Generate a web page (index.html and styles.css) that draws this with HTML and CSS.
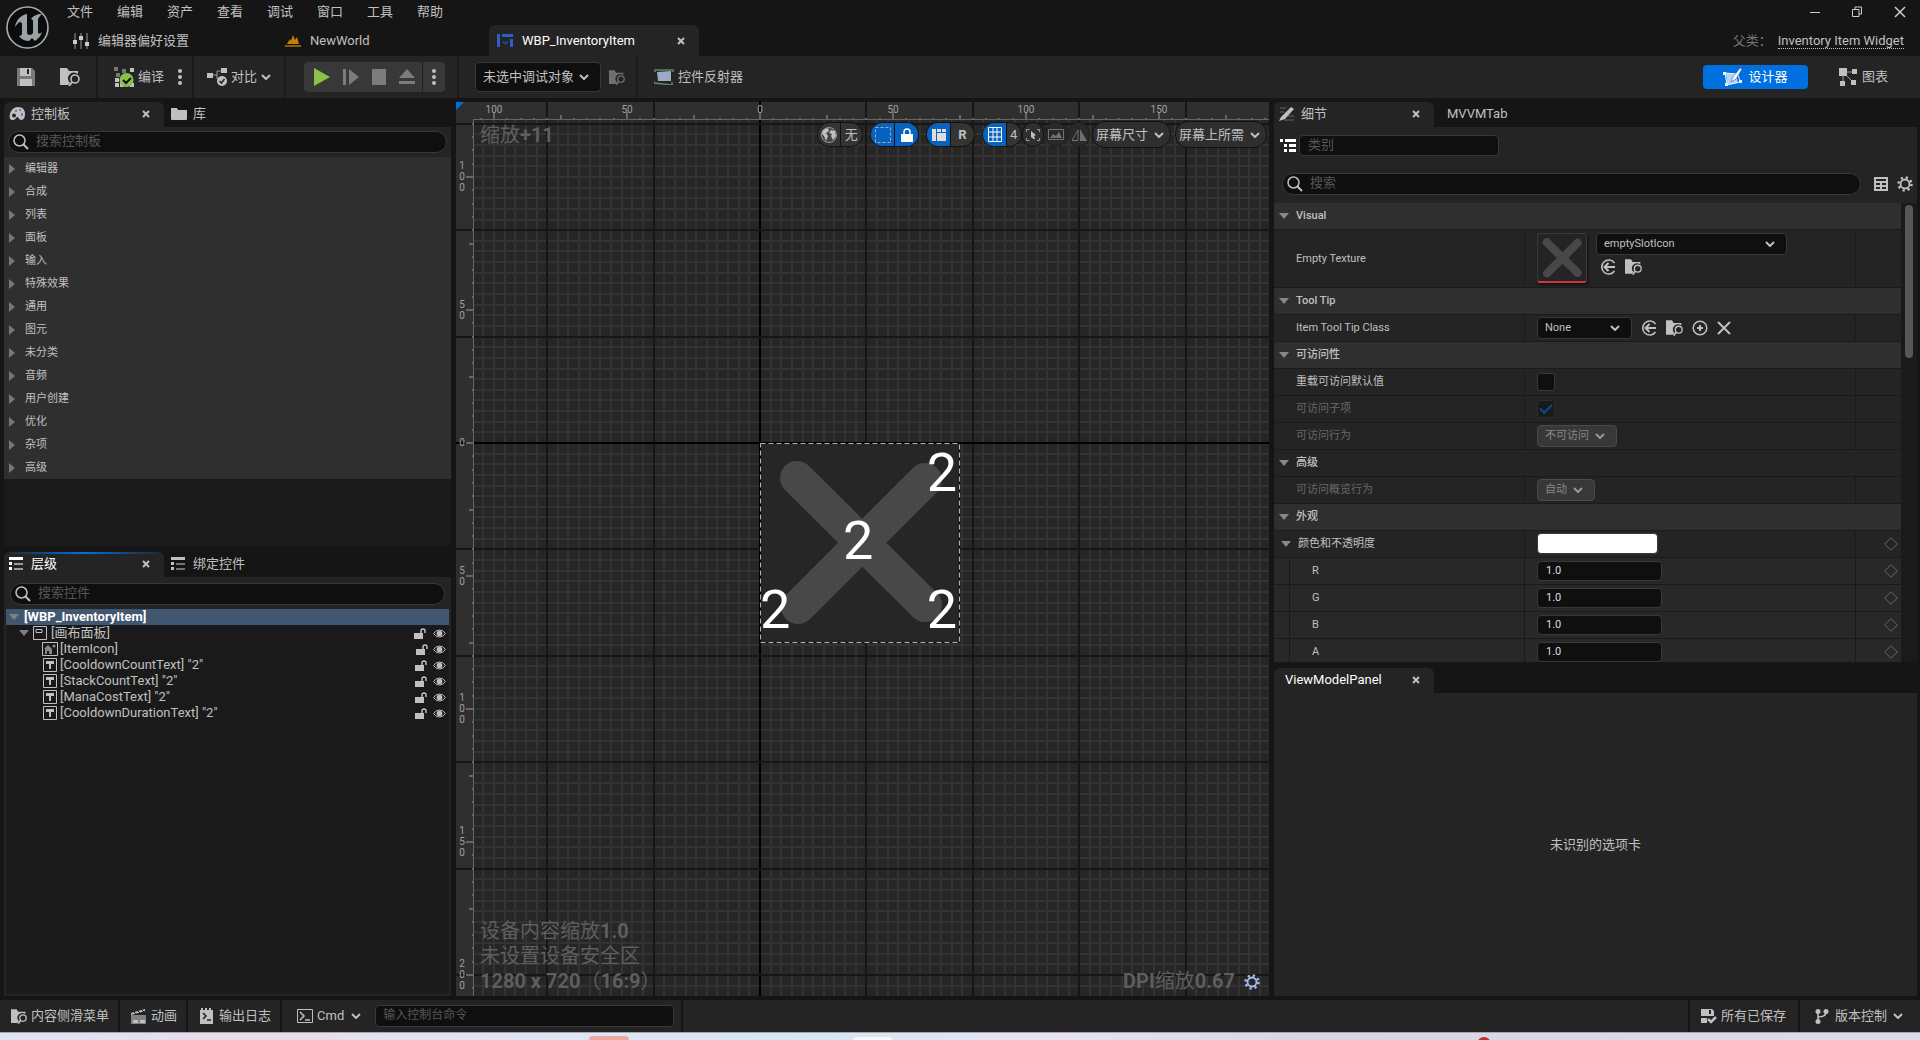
FILE: index.html
```html
<!DOCTYPE html>
<html lang="zh-CN">

<head>
    <meta charset="UTF-8">
    <meta name="viewport" content="width=device-width, initial-scale=1.0">
    <title>WBP_InventoryItem</title>
    <link rel="stylesheet" href="styles.css">
</head>

<body>
    <svg width="0" height="0" class="sprite">
        <symbol id="i-close" viewBox="0 0 8 8"><path d="M1 1l6 6M7 1L1 7" stroke="currentColor" stroke-width="2"/></symbol>
        <symbol id="i-chevron" viewBox="0 0 10 6"><path d="M1 1l4 4 4-4" fill="none" stroke="currentColor" stroke-width="2"/></symbol>
        <symbol id="i-dots" viewBox="0 0 4 16"><circle cx="2" cy="2" r="2"/><circle cx="2" cy="8" r="2"/><circle cx="2" cy="14" r="2"/></symbol>
        <symbol id="i-search" viewBox="0 0 16 16"><circle cx="6.500" cy="6.500" r="5.500" fill="none" stroke="currentColor" stroke-width="1.500"/><path d="M10.500 10.500l4.500 4.500" stroke="currentColor" stroke-width="2"/></symbol>
        <symbol id="i-right" viewBox="0 0 6 10"><path d="M0 0l6 5-6 5z"/></symbol>
        <symbol id="i-down" viewBox="0 0 10 6"><path d="M0 0h10L5 6z"/></symbol>
        <symbol id="i-browse" viewBox="0 0 20 18">
            <path d="M0 0h7l2 3h9v3a6 6 0 0 0-8 9l-2 2H0z"/>
            <circle cx="15" cy="11" r="4" fill="none" stroke="currentColor" stroke-width="1.600"/>
            <path d="M12 14l-3 4" stroke="currentColor" stroke-width="2"/>
        </symbol>
        <symbol id="i-folder" viewBox="0 0 16 12"><path d="M0 0h6l1 2h9v1H0zM0 3h16v8a1 1 0 0 1-1 1H1a1 1 0 0 1-1-1z"/></symbol>
        <symbol id="i-save" viewBox="0 0 18 18">
            <path d="M0 0h15l3 3v15H0z" opacity=".55"/><path d="M3 0h11v8H3zM3 11h12v7H3z"/><path d="M10 1h2v5h-2z" fill="#242424"/>
        </symbol>
        <symbol id="i-list" viewBox="0 0 14 13"><path d="M0 0h14v3H0zM0 5h3v3H0zM0 10h3v3H0z"/><path d="M5 6h9v2H5zM5 11h9v2H5z" opacity=".55"/></symbol>
        <symbol id="i-tree" viewBox="0 0 16 13"><path d="M0 0h3v3H0zM5 0h11v3H5zM4 5h3v3H4zM9 5h7v3H9zM4 10h3v3H4zM9 10h7v3H9z"/></symbol>
        <symbol id="i-use" viewBox="0 0 16 16"><path d="M14.500 4A7 7 0 1 0 14.500 12" fill="none" stroke="currentColor" stroke-width="1.600"/><path d="M15 8H5M8.500 4L4.500 8l4 4" fill="none" stroke="currentColor" stroke-width="2"/></symbol>
        <symbol id="i-plus" viewBox="0 0 16 16"><circle cx="8" cy="8" r="6.800" fill="none" stroke="currentColor" stroke-width="1.500"/><path d="M8 5v6M5 8h6" stroke="currentColor" stroke-width="2"/></symbol>
        <symbol id="i-unlock" viewBox="0 0 12 11"><path d="M0 5h9v6H0z"/><path d="M7 5V3a2 2 0 0 1 4 0v2" fill="none" stroke="currentColor" stroke-width="1.500"/></symbol>
        <symbol id="i-eye" viewBox="0 0 13 9"><path d="M.500 4.500Q3 1 6.500 1t6 3.500Q10 8 6.500 8t-6-3.500z" fill="none" stroke="currentColor"/><circle cx="6.500" cy="4.500" r="2.800"/></symbol>
        <symbol id="i-text" viewBox="0 0 14 14"><path d="M.500.500h13v13H.500z" fill="none" stroke="currentColor"/><path d="M3 3h8v3H8v5H6V6H3z"/></symbol>
        <symbol id="i-diamond" viewBox="0 0 14 14"><path d="M7 .700l6.300 6.300L7 13.300.700 7z" fill="none" stroke="currentColor"/></symbol>
        <symbol id="i-gear" viewBox="0 0 16 16">
            <circle cx="8" cy="8" r="4.500" fill="none" stroke="currentColor" stroke-width="1.800"/>
            <circle cx="8" cy="8" r="6.500" fill="none" stroke="currentColor" stroke-width="2.400" stroke-dasharray="2.200 2.905"/>
        </symbol>
        <symbol id="i-cross" viewBox="0 0 200 200"><path d="M37 35l128 127M165 37L38 164" stroke="#484848" stroke-width="34" stroke-linecap="round"/></symbol>
    </svg>

    <header class="titlebar">
        <svg class="logo" viewBox="0 0 44 44">
            <circle cx="22.500" cy="22.500" r="20.500" fill="#0c0c0c" stroke="#a9adb0" stroke-width="1.600"/>
            <path d="M22 9c-6 1-11 6-12 13 2-3 4-5 5-5s2 1 2 2v9c0 2-1 3-3 3 2 3 6 5 10 5l3-3 3 3c3-2 6-5 7-9-2 2-4 2-4 0V14c1-2 2-3 4-5-5 0-9 2-11 5 1 0 2 1 2 2v12c-1 1-2 2-3 2-2 0-3-1-3-3V14c0-2 0-4 0-5z" fill="#9aa2a6"/>
        </svg>
        <div class="title-rows">
            <div class="menu-row">
                <nav class="menu">
                    <button>文件</button><button>编辑</button><button>资产</button><button>查看</button>
                    <button>调试</button><button>窗口</button><button>工具</button><button>帮助</button>
                </nav>
                <div class="window-controls">
                    <button aria-label="最小化"><svg width="10" height="12"><path d="M0 6.500h10" stroke="#ccc"/></svg></button>
                    <button aria-label="还原"><svg width="10" height="12"><path d="M1 3.500h6v7H.500v-7zM3 3V1h6.500v7H7" fill="none" stroke="#ccc"/></svg></button>
                    <button aria-label="关闭"><svg width="12" height="12"><path d="M1 1l10 10M11 1L1 11" stroke="#ccc" stroke-width="1.500"/></svg></button>
                </div>
            </div>
            <div class="doc-row">
                <div class="doc-tab">
                    <svg width="16" height="16"><path d="M2 0v16M8 0v16M14 0v16" stroke="#999"/><path d="M2 7v4M8 3v4M14 9v4" stroke="#ccc" stroke-width="4"/></svg>
                    <span>编辑器偏好设置</span>
                </div>
                <div class="doc-tab">
                    <svg width="16" height="14"><path d="M2 10l3-5 1 2 2-6 2 5 2-3 2 7z" fill="#c87f0a"/><path d="M0 11h16v2H0z" fill="#8a5a10"/></svg>
                    <span>NewWorld</span>
                </div>
                <div class="doc-tab active">
                    <svg width="16" height="14"><path d="M0 0h3v13H0zM5 0h11v3H5zM13 5h3v8h-3z" fill="#2f5fc4"/><path d="M8.500 11.500L5 8q1-2 3.500 0 2.500-2 3.500 0z" fill="#22407a"/></svg>
                    <span>WBP_InventoryItem</span>
                    <button class="close" aria-label="关闭"><svg width="8" height="8"><use href="#i-close"/></svg></button>
                </div>
                <div class="parent-class"><span>父类：</span><a href="#">Inventory Item Widget</a></div>
            </div>
        </div>
    </header>

    <div class="toolbar">
        <div class="tool-group files">
            <button aria-label="保存"><svg width="18" height="18"><use href="#i-save"/></svg></button>
            <button aria-label="浏览"><svg width="20" height="18"><use href="#i-browse"/></svg></button>
        </div>
        <div class="tool-group compile">
            <button>
                <svg width="20" height="20"><path d="M0 0h4v4H0zM2 6h4v4H2zM8 2h4v4H8z" fill="#777"/><path d="M16 1h4v4h-4zM1 11h4v4H1zM1 16h4v4H1zM6 16h4v4H6zM16 16h4v4h-4z"/><circle cx="12.500" cy="13" r="7" fill="#8bc24a"/><path d="M9 13l3 3 5-5" stroke="#111" stroke-width="2" fill="none"/></svg>
                <span>编译</span>
            </button>
            <button aria-label="编译选项"><svg width="4" height="16"><use href="#i-dots"/></svg></button>
        </div>
        <div class="tool-group diff">
            <button>
                <svg width="20" height="20"><path d="M0 6h6v5H0zM14 1h6v5h-6z"/><path d="M6 8h4V4h4M10 8v4" stroke="#999" fill="none"/><circle cx="15" cy="14" r="5"/><path d="M12.500 14l2 2 3-4" stroke="#222" stroke-width="1.500" fill="none"/></svg>
                <span>对比</span>
                <svg width="10" height="6"><use href="#i-chevron"/></svg>
            </button>
        </div>
        <div class="tool-group play-group">
            <div class="play">
                <button aria-label="播放"><svg width="16" height="18"><path d="M0 0l16 9-16 9z" fill="#8bc24a"/></svg></button>
                <button aria-label="步进"><svg width="16" height="16"><path d="M0 0h3v16H0zM6 0l10 8-10 8z" fill="#7c7c7c"/></svg></button>
                <button aria-label="停止"><svg width="14" height="16"><path d="M0 0h14v16H0z" fill="#7c7c7c"/></svg></button>
                <button aria-label="弹出"><svg width="16" height="16"><path d="M8 0l8 9H0zM0 12h16v3H0z" fill="#7c7c7c"/></svg></button>
                <button class="more" aria-label="播放选项"><svg width="4" height="16"><use href="#i-dots"/></svg></button>
            </div>
        </div>
        <div class="tool-group debug">
            <div class="combo large">
                <select aria-label="调试对象"><option>未选中调试对象</option></select>
                <svg width="10" height="6"><use href="#i-chevron"/></svg>
            </div>
            <button class="dim" aria-label="浏览调试对象"><svg width="16" height="15"><use href="#i-browse"/></svg></button>
        </div>
        <div class="tool-group reflector">
            <button>
                <svg width="20" height="16"><path d="M3 3l14-1v10H4z" fill="#9fa9c8"/><path d="M1 3V1h18v2M0 12v2l18 2v-3" stroke="#5d8a5d" stroke-width="1.500" fill="none"/></svg>
                <span>控件反射器</span>
            </button>
        </div>
        <div class="modes">
            <button class="designer">
                <svg width="20" height="18"><path d="M3 5l10 1 2 9-11 2z" fill="#b5d5f8"/><path d="M2 5l13 1 2 8-13 3z" fill="none" stroke="#e8f2fd"/><path d="M0 4h3v3H0zM2 15h3v3H2zM16 12h3v3h-3z" fill="#e8f2fd"/><path d="M17 0l2 1-6 10-5 3 2-5z" fill="#fff" stroke="#0a4a94" stroke-width=".5"/></svg>
                <span>设计器</span>
            </button>
            <button class="graph">
                <svg width="18" height="18"><path d="M4 4h11M4 4v11M4 4l10 10" stroke="#999" fill="none"/><path d="M0 0h8v8H0zM13 1h5v5h-5zM1 13h5v5H1zM12 12h5v5h-5z"/></svg>
                <span>图表</span>
            </button>
        </div>
    </div>

    <main class="workspace">
        <div class="column left">
            <section class="panel palette">
                <div class="tabs">
                    <div class="tab active">
                        <svg width="16" height="14"><path d="M9 0c5 0 7 3 7 7 0 3-1 6-4 6-2 0-2-3-4-3-1 0-1 3-4 3S0 11 1 7s4-7 8-7z"/><path d="M6 3h2v2H6zM10 2h2v2h-2zM12 6h2v3h-2z" fill="#5c86b8"/><circle cx="5" cy="8.500" r="2" fill="#242424"/></svg>
                        <span>控制板</span>
                        <button class="close" aria-label="关闭"><svg width="8" height="8"><use href="#i-close"/></svg></button>
                    </div>
                    <div class="tab"><svg width="16" height="12"><use href="#i-folder"/></svg><span>库</span></div>
                </div>
                <div class="search-row">
                    <label class="search"><svg width="16" height="16"><use href="#i-search"/></svg><input type="text" placeholder="搜索控制板"></label>
                </div>
                <ul class="categories">
                    <li><svg width="6" height="10"><use href="#i-right"/></svg>编辑器</li>
                    <li><svg width="6" height="10"><use href="#i-right"/></svg>合成</li>
                    <li><svg width="6" height="10"><use href="#i-right"/></svg>列表</li>
                    <li><svg width="6" height="10"><use href="#i-right"/></svg>面板</li>
                    <li><svg width="6" height="10"><use href="#i-right"/></svg>输入</li>
                    <li><svg width="6" height="10"><use href="#i-right"/></svg>特殊效果</li>
                    <li><svg width="6" height="10"><use href="#i-right"/></svg>通用</li>
                    <li><svg width="6" height="10"><use href="#i-right"/></svg>图元</li>
                    <li><svg width="6" height="10"><use href="#i-right"/></svg>未分类</li>
                    <li><svg width="6" height="10"><use href="#i-right"/></svg>音频</li>
                    <li><svg width="6" height="10"><use href="#i-right"/></svg>用户创建</li>
                    <li><svg width="6" height="10"><use href="#i-right"/></svg>优化</li>
                    <li><svg width="6" height="10"><use href="#i-right"/></svg>杂项</li>
                    <li><svg width="6" height="10"><use href="#i-right"/></svg>高级</li>
                </ul>
            </section>

            <section class="panel hierarchy">
                <div class="tabs">
                    <div class="tab active focused">
                        <svg width="14" height="13"><use href="#i-list"/></svg>
                        <span>层级</span>
                        <button class="close" aria-label="关闭"><svg width="8" height="8"><use href="#i-close"/></svg></button>
                    </div>
                    <div class="tab"><svg width="14" height="13"><use href="#i-list"/></svg><span>绑定控件</span></div>
                </div>
                <div class="search-row">
                    <label class="search"><svg width="16" height="16"><use href="#i-search"/></svg><input type="text" placeholder="搜索控件"></label>
                </div>
                <ul class="tree">
                    <li class="selected"><svg class="arrow" width="10" height="6"><use href="#i-down"/></svg><span>[WBP_InventoryItem]</span></li>
                    <li class="level-1">
                        <svg class="arrow" width="10" height="6"><use href="#i-down"/></svg>
                        <svg width="14" height="14"><path d="M.500.500h13v13H.500zM3 3.500h6v3H3z" fill="none" stroke="#c0c0c0"/></svg>
                        <span>[画布面板]</span>
                        <svg class="lock" width="12" height="11"><use href="#i-unlock"/></svg><svg width="13" height="9"><use href="#i-eye"/></svg>
                    </li>
                    <li class="level-2 image">
                        <svg width="16" height="14"><path d="M.500.500h15v13H.500z" fill="none" stroke="#c0c0c0"/><path d="M2 7l4-4 4 4v5H7V9H5v3H3V7z" fill="#888"/><circle cx="12" cy="4" r="1.500" fill="#888"/></svg>
                        <span>[ItemIcon]</span>
                        <svg class="lock" width="12" height="11"><use href="#i-unlock"/></svg><svg width="13" height="9"><use href="#i-eye"/></svg>
                    </li>
                    <li class="level-2">
                        <svg width="14" height="14"><use href="#i-text"/></svg>
                        <span>[CooldownCountText] "2"</span>
                        <svg class="lock" width="12" height="11"><use href="#i-unlock"/></svg><svg width="13" height="9"><use href="#i-eye"/></svg>
                    </li>
                    <li class="level-2">
                        <svg width="14" height="14"><use href="#i-text"/></svg>
                        <span>[StackCountText] "2"</span>
                        <svg class="lock" width="12" height="11"><use href="#i-unlock"/></svg><svg width="13" height="9"><use href="#i-eye"/></svg>
                    </li>
                    <li class="level-2">
                        <svg width="14" height="14"><use href="#i-text"/></svg>
                        <span>[ManaCostText] "2"</span>
                        <svg class="lock" width="12" height="11"><use href="#i-unlock"/></svg><svg width="13" height="9"><use href="#i-eye"/></svg>
                    </li>
                    <li class="level-2">
                        <svg width="14" height="14"><use href="#i-text"/></svg>
                        <span>[CooldownDurationText] "2"</span>
                        <svg class="lock" width="12" height="11"><use href="#i-unlock"/></svg><svg width="13" height="9"><use href="#i-eye"/></svg>
                    </li>
                </ul>
            </section>
        </div>

        <section class="viewport" id="viewport">
            <svg class="grid" id="grid"></svg>
            <div class="widget">
                <svg width="200" height="200"><use href="#i-cross"/><rect x=".500" y=".500" width="199" height="199" fill="none" stroke="#000"/><rect x=".500" y=".500" width="199" height="199" fill="none" stroke="#b4b4b4" stroke-dasharray="5 3"/></svg>
                <span class="count top-right">2</span>
                <span class="count middle">2</span>
                <span class="count bottom-left">2</span>
                <span class="count bottom-right">2</span>
            </div>
            <div class="overlay zoom-level">缩放<b>+11</b></div>
            <div class="overlay device-info">
                <div>设备内容缩放<b>1.0</b></div>
                <div>未设置设备安全区</div>
                <div><b>1280 x 720</b>（<b>16:9</b>）</div>
            </div>
            <div class="overlay dpi">
                <span><b>DPI</b>缩放<b>0.67</b></span>
                <button aria-label="DPI设置"><svg width="16" height="16"><use href="#i-gear"/></svg></button>
            </div>
            <div class="canvas-tools">
                <div class="pill locale">
                    <button aria-label="本地化"><svg width="16" height="16"><circle cx="8" cy="8" r="7.500" fill="#444" stroke="#999"/><path d="M2 3l5-2 1 3-3 2 2 3-2 5-2-5-2-2zM10 3l4 1 1 5-3 4-2-4 1-2-3-1z"/></svg></button>
                    <button>无</button>
                </div>
                <div class="pill">
                    <button class="on" aria-label="虚线轮廓"><svg width="16" height="16"><rect x=".500" y=".500" width="15" height="15" fill="none" stroke="#aab" stroke-dasharray="3 2"/></svg></button>
                    <button class="on" aria-label="锁定"><svg width="12" height="14"><path d="M0 6h12v8H0z" fill="#fff"/><path d="M3 6V4a3 3 0 0 1 6 0v2" fill="none" stroke="#fff" stroke-width="1.500"/></svg></button>
                </div>
                <div class="pill">
                    <button class="on" aria-label="布局"><svg width="14" height="12"><path d="M0 0h4v12H0zM5 0h4v3H5zM10 0h4v3h-4zM5 4h9v8H5z" fill="#ddd"/></svg></button>
                    <button><b>R</b></button>
                </div>
                <div class="pill snap">
                    <button class="on" aria-label="网格对齐"><svg width="14" height="15"><path d="M.500.500h13v14H.500zM5 0v15M9 0v15M0 5h14M0 10h14" fill="none" stroke="#fff"/></svg></button>
                    <button>4</button>
                </div>
                <div class="rounds">
                    <button aria-label="选择"><svg width="14" height="12"><path d="M.500 3V.500h3M11 .500h2.500V3M.500 9v2.500h3M11 11.500h2.500V9" fill="none" stroke="#999"/><path d="M5 2l5 4-2 1 1 3H7L6 8l-1 1z"/></svg></button>
                    <button class="dim" aria-label="背景图像"><svg width="16" height="11"><path d="M.500.500h15v10H.500z" fill="none" stroke="currentColor"/><path d="M2 9l3-4 3 2 3-4 3 6z"/></svg></button>
                    <button class="dim" aria-label="镜像"><svg width="16" height="12"><path d="M7 1v10.500H1z" fill="none" stroke="currentColor"/><path d="M9 0v12h7z"/></svg></button>
                </div>
                <div class="combo pill-combo screen">
                    <select aria-label="屏幕尺寸"><option>屏幕尺寸</option></select><svg width="10" height="6"><use href="#i-chevron"/></svg>
                </div>
                <div class="combo pill-combo">
                    <select aria-label="屏幕上所需"><option>屏幕上所需</option></select><svg width="10" height="6"><use href="#i-chevron"/></svg>
                </div>
            </div>
        </section>

        <div class="column right">
            <section class="panel details">
                <div class="tabs">
                    <div class="tab active">
                        <svg width="16" height="14"><path d="M1 1h6M1 5h4M8 9h7M5 13h10" stroke="#666"/><path d="M12 0l3 2-9 10-6 2 2-4z"/></svg>
                        <span>细节</span>
                        <button class="close" aria-label="关闭"><svg width="8" height="8"><use href="#i-close"/></svg></button>
                    </div>
                    <div class="tab"><span>MVVMTab</span></div>
                </div>
                <label class="category"><svg width="16" height="13"><use href="#i-tree"/></svg><input type="text" placeholder="类别"></label>
                <div class="detail-search">
                    <label class="search"><svg width="16" height="16"><use href="#i-search"/></svg><input type="text" placeholder="搜索"></label>
                    <button aria-label="表格视图"><svg width="14" height="14"><path d="M1 1h12v12H1zM1 5h12M1 9h12M7 5v8" fill="none" stroke="currentColor" stroke-width="2"/></svg></button>
                    <button aria-label="设置"><svg width="16" height="16"><use href="#i-gear"/></svg></button>
                </div>
                <div class="properties">
                    <div class="property-list">
                        <h3><svg width="10" height="6"><use href="#i-down"/></svg>Visual</h3>
                        <div class="property tall">
                            <label for="texture">Empty Texture</label>
                            <div class="value">
                                <div class="thumb"><svg width="50" height="48" viewBox="0 0 200 200"><use href="#i-cross"/></svg></div>
                                <div class="asset">
                                    <div class="combo wide"><select id="texture"><option>emptySlotIcon</option></select><svg width="10" height="6"><use href="#i-chevron"/></svg></div>
                                    <div class="asset-buttons">
                                        <button aria-label="使用所选"><svg width="16" height="16"><use href="#i-use"/></svg></button>
                                        <button aria-label="浏览资产"><svg width="17" height="16"><use href="#i-browse"/></svg></button>
                                    </div>
                                </div>
                            </div>
                            <div class="reset"></div>
                        </div>
                        <h3><svg width="10" height="6"><use href="#i-down"/></svg>Tool Tip</h3>
                        <div class="property">
                            <label for="tooltip">Item Tool Tip Class</label>
                            <div class="value">
                                <div class="combo medium"><select id="tooltip"><option>None</option></select><svg width="10" height="6"><use href="#i-chevron"/></svg></div>
                                <div class="asset-buttons">
                                    <button aria-label="使用所选"><svg width="16" height="16"><use href="#i-use"/></svg></button>
                                    <button aria-label="浏览资产"><svg width="17" height="16"><use href="#i-browse"/></svg></button>
                                    <button aria-label="新建"><svg width="16" height="16"><use href="#i-plus"/></svg></button>
                                    <button aria-label="清除"><svg width="14" height="14" viewBox="0 0 14 14"><path d="M1 1l12 12M13 1L1 13" stroke="currentColor" stroke-width="2"/></svg></button>
                                </div>
                            </div>
                            <div class="reset"></div>
                        </div>
                        <h3><svg width="10" height="6"><use href="#i-down"/></svg>可访问性</h3>
                        <div class="property">
                            <label for="override">重载可访问默认值</label>
                            <div class="value"><input type="checkbox" id="override"></div>
                            <div class="reset"></div>
                        </div>
                        <div class="property disabled">
                            <label for="children">可访问子项</label>
                            <div class="value"><input type="checkbox" id="children" checked disabled></div>
                            <div class="reset"></div>
                        </div>
                        <div class="property disabled">
                            <label for="behavior">可访问行为</label>
                            <div class="value"><div class="combo gray"><select id="behavior" disabled><option>不可访问</option></select><svg width="10" height="6"><use href="#i-chevron"/></svg></div></div>
                            <div class="reset"></div>
                        </div>
                        <h3 class="sub"><svg width="10" height="6"><use href="#i-down"/></svg>高级</h3>
                        <div class="property disabled">
                            <label for="summary">可访问概览行为</label>
                            <div class="value"><div class="combo gray"><select id="summary" disabled><option>自动</option></select><svg width="10" height="6"><use href="#i-chevron"/></svg></div></div>
                            <div class="reset"></div>
                        </div>
                        <h3><svg width="10" height="6"><use href="#i-down"/></svg>外观</h3>
                        <div class="property expandable">
                            <label for="color"><svg width="10" height="6"><use href="#i-down"/></svg>颜色和不透明度</label>
                            <div class="value"><button class="swatch" id="color" aria-label="颜色"></button></div>
                            <div class="reset"><svg width="14" height="14"><use href="#i-diamond"/></svg></div>
                        </div>
                        <div class="property channel">
                            <label for="red">R</label>
                            <div class="value"><input type="text" id="red" value="1.0"></div>
                            <div class="reset"><svg width="14" height="14"><use href="#i-diamond"/></svg></div>
                        </div>
                        <div class="property channel">
                            <label for="green">G</label>
                            <div class="value"><input type="text" id="green" value="1.0"></div>
                            <div class="reset"><svg width="14" height="14"><use href="#i-diamond"/></svg></div>
                        </div>
                        <div class="property channel">
                            <label for="blue">B</label>
                            <div class="value"><input type="text" id="blue" value="1.0"></div>
                            <div class="reset"><svg width="14" height="14"><use href="#i-diamond"/></svg></div>
                        </div>
                        <div class="property channel">
                            <label for="alpha">A</label>
                            <div class="value"><input type="text" id="alpha" value="1.0"></div>
                            <div class="reset"><svg width="14" height="14"><use href="#i-diamond"/></svg></div>
                        </div>
                    </div>
                    <div class="scrollbar"><div class="scroll-thumb"></div></div>
                </div>
            </section>

            <section class="panel viewmodel">
                <div class="tabs">
                    <div class="tab active bright">
                        <span>ViewModelPanel</span>
                        <button class="close" aria-label="关闭"><svg width="8" height="8"><use href="#i-close"/></svg></button>
                    </div>
                </div>
                <div class="empty">未识别的选项卡</div>
            </section>
        </div>
    </main>

    <footer class="statusbar">
        <button><svg width="16" height="15"><use href="#i-browse"/></svg><span>内容侧滑菜单</span></button>
        <button><svg width="16" height="15"><path d="M0 6h15v9H0z" opacity=".6"/><path d="M0 4l14-4v2L0 6zM2 11h5v3H2zM9 11h5v3H9z"/><path d="M3 3l2 2M7 2l2 2M11 1l2 2" stroke="#242424"/></svg><span>动画</span></button>
        <button class="log"><svg width="13" height="16"><path d="M0 2h13v14H0zM1 0h2v3H1zM5 0h2v3H5zM9 0h2v3H9z"/><path d="M3 5l3 3-3 3M7 12h4" stroke="#222" stroke-width="1.500" fill="none"/></svg><span>输出日志</span></button>
        <div class="console">
            <button>
                <svg width="16" height="14"><path d="M.500.500h15v13H.500z" fill="none" stroke="currentColor"/><path d="M3 3l4 4-4 4M8 11h5" stroke="currentColor" stroke-width="1.500" fill="none"/></svg>
                <span>Cmd</span><svg width="10" height="6"><use href="#i-chevron"/></svg>
            </button>
            <input type="text" aria-label="控制台" placeholder="输入控制台命令">
        </div>
        <button class="saved"><svg width="16" height="15"><path d="M0 0h11l2 2v5H0zM0 9h6v5H0z"/><path d="M8 1h2v4H8z" fill="#242424"/><path d="M7 10l3 3 5-5" stroke="currentColor" stroke-width="2.500" fill="none"/></svg><span>所有已保存</span></button>
        <button class="source"><svg width="14" height="15"><circle cx="3" cy="2.500" r="2.500"/><circle cx="3" cy="12.500" r="2.500"/><circle cx="11" cy="2.500" r="2.500"/><path d="M3 3v9M11 3q0 5-8 5" fill="none" stroke="currentColor" stroke-width="1.500"/></svg><span>版本控制</span><svg width="10" height="6"><use href="#i-chevron"/></svg></button>
    </footer>
    <div class="desktop">
        <svg width="100%" height="8"><rect x="589" y="3" width="40" height="8" rx="4" fill="#e9aaa6"/><rect x="854" y="4" width="38" height="8" rx="3" fill="#f7f9fc"/><circle cx="1484" cy="11" r="7" fill="#b93030"/></svg>
    </div>

    <script>
        var viewport = document.querySelector('#viewport');
        var grid = document.querySelector('#grid');
        var origin = { x: 304, y: 341 };
        var ruler = 18;
        var scale = 2.66; // screen pixels per slate unit

        function rect(x, y, w, h, fill) {
            return '<rect x="' + x + '" y="' + y + '" width="' + w + '" height="' + h + '" fill="' + fill + '"/>';
        }

        function label(x, y, text) {
            return '<text x="' + x + '" y="' + y + '">' + text + '</text>';
        }

        function drawGrid() {
            var w = viewport.clientWidth;
            var h = viewport.clientHeight;
            var minor = '', major = '', marks = '';
            var i, p;

            function lines(start, size, vertical) {
                var step = 4 * scale;
                for (i = Math.ceil(-start / step); start + i * step < size; i++) {
                    p = Math.round(start + i * step) - 1;
                    if (i % 10 === 0) {
                        var color = i === 0 ? '#000' : '#161616';
                        major += vertical ? rect(p, 0, 2, h, color) : rect(0, p, w, 2, color);
                    } else if (p > ruler) {
                        minor += vertical ? rect(p, ruler, 2, h, '#333') : rect(ruler, p, w, 2, '#333');
                    }
                }
            }

            function ticks(start, size, vertical) {
                var step = 5 * scale;
                for (i = Math.ceil((ruler - start) / step); start + i * step < size; i++) {
                    p = Math.round(start + i * step);
                    var len = i % 10 === 0 ? 8 : i % 5 === 0 ? 5 : 2;
                    marks += vertical ? rect(ruler - len, p - 1, len, 2, '#666') : rect(p - 1, ruler - len, 2, len, '#666');
                    if (i % 10 === 0) {
                        var text = String(Math.abs(i * 5));
                        if (vertical) {
                            for (var c = 0; c < text.length; c++) {
                                marks += label(6, p + 3 + c * 11 - Math.floor((text.length - 1) * 11 / 2), text[c]);
                            }
                        } else {
                            marks += label(p, 11, text);
                        }
                    }
                }
            }

            lines(origin.x, w, true);
            lines(origin.y, h, false);
            ticks(origin.x, w, false);
            ticks(origin.y, h, true);

            grid.innerHTML = rect(0, 0, w, ruler, '#2f2f2f') + rect(0, 0, ruler, h, '#2f2f2f') + minor + major +
                rect(ruler - 1, ruler - 1, w, 1, '#666') + rect(ruler - 1, ruler - 1, 1, h, '#666') + marks +
                '<path d="M0 0h8L0 8z" fill="#0070e0"/>';
        }

        drawGrid();
        window.onresize = drawGrid;
    </script>
</body>

</html>
```
FILE: styles.css
```css
* {
    box-sizing: border-box;
}

body {
    margin: 0;
    height: 100vh;
    display: flex;
    flex-direction: column;
    overflow: hidden;
    background: #151515;
    color: #c0c0c0;
    font-family: Roboto, "Noto Sans CJK SC", sans-serif;
    font-size: 13px;
    line-height: 16px;
}

svg {
    flex: none;
    display: block;
    fill: currentColor;
}

.sprite {
    position: absolute;
}

button,
input,
select {
    font: inherit;
    color: inherit;
    margin: 0;
}

button {
    display: flex;
    align-items: center;
    padding: 0;
    border: 0;
    background: none;
    white-space: nowrap;
}

input[type="text"] {
    min-width: 0;
    border: 1px solid #383838;
    border-radius: 4px;
    background: #0f0f0f;
    outline: none;
}

input::placeholder {
    color: #575757;
    opacity: 1;
}

ul,
h3 {
    margin: 0;
    padding: 0;
    list-style: none;
}

.dim {
    color: #707070;
}

/* title bar */
.titlebar {
    flex: none;
    display: flex;
    height: 56px;
    padding-left: 5px;
}

.logo {
    width: 44px;
    height: 44px;
    margin-top: 5px;
}

.title-rows {
    flex: 1;
    padding-left: 16px;
}

.menu-row {
    display: flex;
    justify-content: space-between;
    height: 25px;
    padding: 0 0 2px 2px;
}

.menu {
    display: flex;
    gap: 24px;
}

.window-controls {
    display: flex;
    align-items: center;
    gap: 32px;
    padding-right: 14px;
}

.doc-row {
    display: flex;
    height: 31px;
}

.doc-tab {
    display: flex;
    align-items: center;
    gap: 9px;
    width: 212px;
    padding: 0 8px;
}

.doc-tab.active {
    width: 210px;
    padding-right: 14px;
    border-radius: 6px 6px 0 0;
    background: #242424;
    color: #fff;
}

.close {
    margin-left: auto;
    color: #c0c0c0;
}

.parent-class {
    display: flex;
    align-items: center;
    gap: 6px;
    margin-left: auto;
    padding-right: 16px;
    color: #777;
}

.parent-class a {
    color: #c0c0c0;
    text-decoration: none;
    border-bottom: 1px dotted #c0c0c0;
    line-height: 15px;
}

/* toolbar */
.toolbar {
    flex: none;
    display: flex;
    height: 42px;
    background: #242424;
}

.tool-group {
    display: flex;
    align-items: center;
    border-right: 2px solid #1a1a1a;
}

.tool-group button {
    gap: 4px;
}

.files {
    width: 98px;
    padding-left: 17px;
    gap: 25px;
}

.compile {
    width: 96px;
    padding-left: 16px;
    gap: 14px;
}

.diff {
    width: 92px;
    padding-left: 13px;
}

.play-group {
    width: 173px;
    padding-left: 18px;
}

.play {
    display: flex;
    align-items: center;
    gap: 13px;
    height: 30px;
    padding-left: 10px;
    border-radius: 4px;
    background: #383838;
}

.play .more {
    height: 30px;
    margin-left: -6px;
    padding: 0 9px;
    border-left: 1px solid #1f1f1f;
}

.debug {
    width: 179px;
    padding-left: 16px;
    gap: 8px;
}

.reflector {
    padding-left: 16px;
    border: 0;
}

.modes {
    display: flex;
    align-items: center;
    gap: 31px;
    margin-left: auto;
    padding-right: 32px;
}

.modes button {
    gap: 5px;
}

.modes .designer {
    justify-content: center;
    width: 105px;
    height: 24px;
    border-radius: 4px;
    background: #0070e0;
    color: #fff;
}

/* drop-downs */
.combo {
    display: inline-grid;
    align-items: center;
}

.combo > * {
    grid-area: 1 / 1;
}

.combo svg {
    justify-self: end;
    margin-right: 12px;
    pointer-events: none;
}

.combo select {
    appearance: none;
    width: 100%;
    height: 22px;
    padding: 0 27px 0 7px;
    border: 1px solid #383838;
    border-radius: 4px;
    background: #0f0f0f;
    outline: none;
}

.combo.large select {
    width: 126px;
    height: 30px;
}

.combo.wide {
    width: 191px;
}

.combo.medium {
    width: 95px;
}

.combo.gray select {
    border-color: #4a4a4a;
    background: #383838;
    color: #888;
    opacity: 1;
}

.combo.gray svg {
    color: #999;
}

/* workspace */
.workspace {
    flex: 1;
    min-height: 0;
    display: grid;
    grid-template-columns: 447px minmax(0, 1fr) 643px;
    grid-template-rows: minmax(0, 1fr);
    gap: 5px;
    padding: 4px 3px 4px 4px;
}

.column {
    display: grid;
    gap: 6px;
    min-height: 0;
}

.left {
    grid-template-rows: minmax(0, 1fr) minmax(0, 1fr);
}

.right {
    grid-template-rows: minmax(0, 560fr) minmax(0, 328fr);
}

.panel {
    display: flex;
    flex-direction: column;
    min-height: 0;
}

.tabs {
    flex: none;
    display: flex;
    height: 25px;
}

.tab {
    display: flex;
    align-items: center;
    gap: 6px;
    padding: 0 7px 2px;
}

.tab.active {
    width: 160px;
    padding: 0 14px 2px 5px;
    border-radius: 6px 6px 0 0;
    background: #242424;
}

.tab.focused {
    color: #fff;
    background: linear-gradient(90deg, #242424, #0070e0, #242424) top / 100% 2px no-repeat #242424;
}

.hierarchy .tab {
    gap: 8px;
}

.right .tab:not(.active) {
    padding-left: 13px;
}

.tab.bright {
    padding-left: 11px;
    color: #fff;
}

.search {
    display: grid;
    align-items: center;
}

.search > * {
    grid-area: 1 / 1;
}

.search svg {
    z-index: 1;
    margin-left: 5px;
}

.search input {
    height: 22px;
    padding: 0 12px 3px 27px;
    border-radius: 11px;
}

.search-row {
    flex: none;
    padding: 4px;
    background: #242424;
}

.palette,
.hierarchy {
    background: #1a1a1a;
}

.palette .tabs,
.hierarchy .tabs {
    background: #151515;
}

.categories {
    background: #2f2f2f;
    font-size: 11px;
}

.categories li {
    display: flex;
    align-items: center;
    gap: 10px;
    height: 23px;
    padding-left: 5px;
}

.categories svg {
    color: #777;
}

.hierarchy .search-row {
    padding: 6px 6px 4px;
}

.tree {
    flex: 1;
    border: solid #242424;
    border-width: 0 2px 2px;
}

.tree li {
    display: flex;
    align-items: center;
    gap: 3px;
    height: 16px;
    padding: 0 3px;
}

.tree .arrow {
    color: #808080;
}

.tree .lock {
    margin-left: auto;
    margin-right: 3px;
}

.tree .selected {
    gap: 5px;
    background: #40576f;
    color: #fff;
    font-weight: bold;
}

.tree .level-1 {
    gap: 4px;
    padding-left: 13px;
}

.tree .level-2 {
    padding-left: 37px;
}

.tree .image {
    gap: 2px;
    padding-left: 36px;
}

/* designer canvas */
.viewport {
    position: relative;
    overflow: hidden;
    background: #262626;
}

.grid {
    width: 100%;
    height: 100%;
}

.grid text {
    fill: #a0a0a0;
    font-size: 10px;
    text-anchor: middle;
}

.widget {
    position: absolute;
    left: 304px;
    top: 341px;
    width: 200px;
    height: 200px;
    background: #262626;
}

.count {
    position: absolute;
    color: #fff;
    font-size: 54px;
    line-height: 64px;
}

.top-right {
    right: 3px;
    top: -2px;
}

.middle {
    left: 83px;
    top: 66px;
}

.bottom-left {
    left: 0;
    bottom: 1px;
}

.bottom-right {
    right: 3px;
    bottom: 1px;
}

.overlay {
    position: absolute;
    color: #5e5e5e;
    font-size: 20px;
    line-height: 25px;
}

.zoom-level {
    left: 24px;
    top: 21px;
}

.device-info {
    left: 24px;
    bottom: 2px;
}

.dpi {
    display: flex;
    align-items: center;
    gap: 9px;
    right: 9px;
    bottom: 2px;
}

.dpi button {
    color: #a9bdf0;
}

.canvas-tools {
    position: absolute;
    top: 19px;
    right: 2px;
    display: flex;
    align-items: center;
    gap: 7px;
}

.pill {
    display: flex;
    width: 49px;
    height: 25px;
    border: 1px solid #111;
    border-radius: 13px;
    background: #343434;
    overflow: hidden;
}

.pill button {
    flex: 1;
    justify-content: center;
}

.pill button + button {
    border-left: 1px solid #111;
}

.pill .on {
    background: #0862c0;
}

.pill.locale {
    width: 46px;
}

.pill.snap {
    width: 40px;
}

.snap .on {
    padding: 0 3px 0 5px;
}

.rounds {
    display: flex;
    gap: 1px;
    margin: 0 -5px 0 -7px;
}

.rounds button {
    justify-content: center;
    width: 22px;
    height: 25px;
    border: 1px solid #111;
    border-radius: 12px;
    background: #2f2f2f;
}

.rounds .dim {
    border-color: #1f1f1f;
    background: #292929;
}

.pill-combo {
    width: 92px;
}

.pill-combo.screen {
    width: 79px;
    margin-right: -3px;
}

.pill-combo select {
    height: 27px;
    padding: 0 20px 0 3px;
    border-color: #111;
    border-radius: 13px;
    background: #2f2f2f;
}

.pill-combo svg {
    margin-right: 7px;
}

/* details */
.details,
.viewmodel {
    background: #242424;
}

.details .tabs,
.viewmodel .tabs {
    background: #151515;
}

.category {
    flex: none;
    display: flex;
    align-items: center;
    gap: 3px;
    padding: 8px 6px 17px;
}

.category svg {
    color: #fff;
}

.category input {
    width: 200px;
    height: 21px;
    padding: 0 8px 3px;
}

.detail-search {
    flex: none;
    display: flex;
    align-items: center;
    gap: 9px;
    height: 30px;
    padding: 0 4px 8px 8px;
}

.detail-search .search {
    flex: 1;
    margin-right: 4px;
}

.properties {
    flex: 1;
    min-height: 0;
    display: flex;
    overflow: hidden;
}

.property-list {
    flex: 1;
    font-size: 11px;
}

.property-list h3 {
    display: flex;
    align-items: center;
    gap: 7px;
    height: 27px;
    padding-left: 5px;
    border-bottom: 1px solid #1a1a1a;
    background: #2f2f2f;
    font-size: 11px;
    font-weight: 500;
}

.property-list h3.sub {
    background: #242424;
}

.property-list h3 svg,
.expandable label svg {
    color: #888;
}

.property {
    display: grid;
    grid-template-columns: 251px 1fr 45px;
    height: 27px;
    border-bottom: 1px solid #1a1a1a;
}

.property.tall {
    height: 58px;
}

.property label,
.value {
    display: flex;
    align-items: center;
    border-right: 1px solid #1a1a1a;
}

.property label {
    padding-left: 22px;
}

.value {
    padding: 0 0 1px 12px;
    gap: 9px;
}

.reset {
    display: flex;
    align-items: center;
    justify-content: flex-end;
    padding-right: 3px;
    color: #686868;
}

.disabled label {
    color: #686868;
}

.expandable label {
    gap: 7px;
    padding-left: 7px;
}

.channel {
    background: #282828;
}

.channel label {
    margin-left: 15px;
    border-left: 1px solid #1a1a1a;
}

.channel input[type="text"] {
    width: 125px;
    height: 20px;
    padding: 0 8px 1px;
    color: #ddd;
}

.swatch {
    width: 121px;
    height: 21px;
    border: 1px solid #383838;
    border-radius: 4px;
    background: #fff;
}

.thumb {
    width: 50px;
    height: 50px;
    border: 1px solid #383838;
    border-bottom: 2px solid #c8373d;
    border-radius: 3px;
    box-shadow: 1px 2px 3px #111;
}

.thumb svg {
    width: 48px;
}

.asset {
    display: flex;
    flex-direction: column;
    gap: 2px;
    height: 50px;
}

.asset-buttons {
    display: flex;
    align-items: center;
    gap: 9px;
}

.asset .asset-buttons {
    height: 20px;
    padding-left: 4px;
}

input[type="checkbox"] {
    appearance: none;
    display: grid;
    place-items: center;
    width: 18px;
    height: 18px;
    border: 1px solid #383838;
    border-radius: 3px;
    background: #0f0f0f;
}

input[type="checkbox"]:disabled {
    border-color: #2c2c2c;
    background: #1a1a1a;
}

input[type="checkbox"]:checked::after {
    content: "";
    width: 10px;
    height: 5px;
    margin-bottom: 3px;
    border: solid #0a4a8c;
    border-width: 0 0 2px 2px;
    transform: rotate(-45deg);
}

.scrollbar {
    width: 16px;
    padding: 2px 4px;
    background: #1a1a1a;
}

.scroll-thumb {
    height: 153px;
    border-radius: 4px;
    background: #575757;
}

.empty {
    flex: 1;
    display: flex;
    align-items: center;
    justify-content: center;
}

/* status bar */
.statusbar {
    flex: none;
    display: flex;
    height: 32px;
    padding-right: 3px;
    background: #242424;
}

.statusbar > * {
    padding: 0 9px 0 11px;
    border-right: 2px solid #151515;
}

.statusbar button {
    gap: 4px;
}

.statusbar .log {
    padding-left: 12px;
    gap: 6px;
}

.console {
    display: flex;
    align-items: center;
    gap: 14px;
    padding: 0 7px 0 15px;
}

.console button svg:last-child {
    margin-left: 3px;
}

.console input[type="text"] {
    width: 299px;
    height: 22px;
    padding: 0 7px 3px;
    font-size: 12px;
}

.statusbar .saved {
    margin-left: auto;
    border-left: 2px solid #151515;
    padding-right: 12px;
}

.statusbar .source {
    padding: 0 14px 0 15px;
    gap: 6px;
    border: 0;
}

.desktop {
    flex: none;
    height: 8px;
    border-top: 1px solid #aaa4ae;
    background: linear-gradient(90deg, #dfe3f2, #e8dcec 13%, #dfe5f2 30%, #d5e8f2 43%, #e8e2f2 55%, #d8d6e4 68%, #dcdbea);
}
```
